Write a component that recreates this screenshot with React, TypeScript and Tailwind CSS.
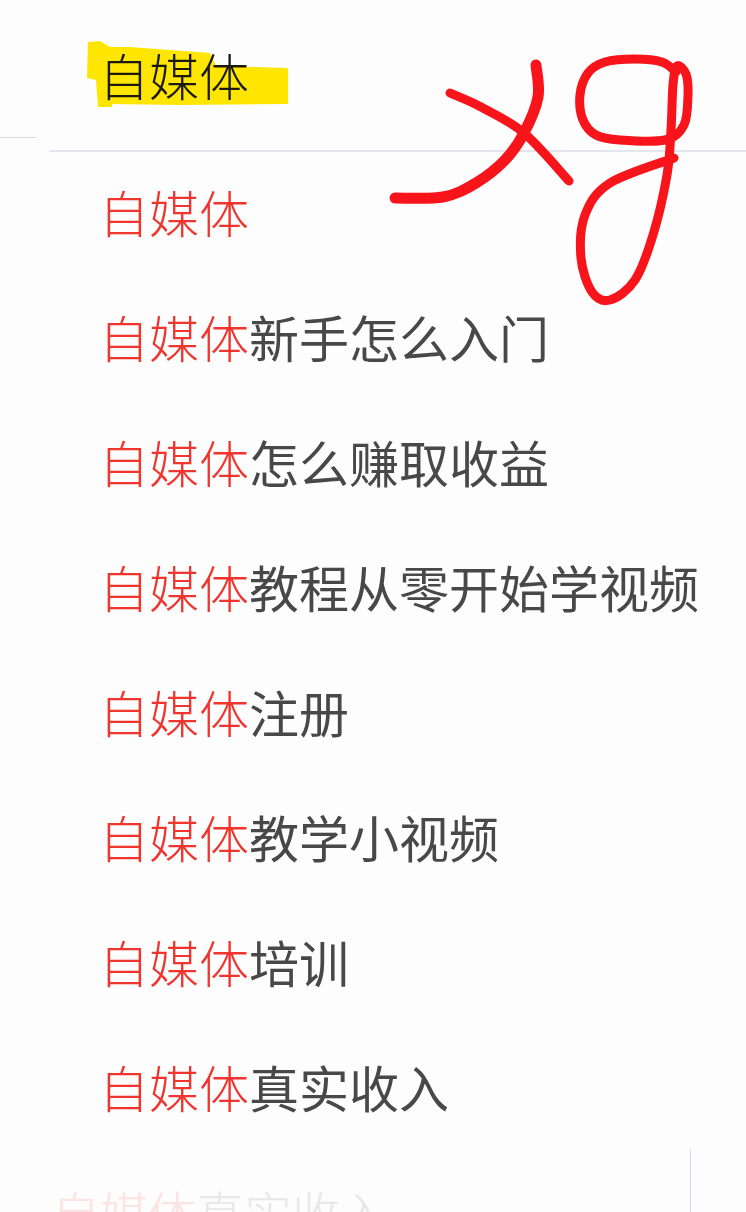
const keyword = "自媒体";
const suggestions = ["", "新手怎么入门", "怎么赚取收益", "教程从零开始学视频", "注册", "教学小视频", "培训", "真实收入"];

type Pt = [number, number];

function smooth(points: Pt[]): string {
  let d = `M${points[0][0]} ${points[0][1]}`;
  for (let i = 0; i < points.length - 1; i++) {
    const p0 = points[Math.max(i - 1, 0)];
    const p1 = points[i];
    const p2 = points[i + 1];
    const p3 = points[Math.min(i + 2, points.length - 1)];
    d += ` C${p1[0] + (p2[0] - p0[0]) / 6} ${p1[1] + (p2[1] - p0[1]) / 6} ${p2[0] - (p3[0] - p1[0]) / 6} ${p2[1] - (p3[1] - p1[1]) / 6} ${p2[0]} ${p2[1]}`;
  }
  return d;
}

const strokeA: Pt[] = [[395, 198], [443, 197], [476, 183], [505, 160], [524, 133], [538, 97], [536, 65]];
const strokeB: Pt[] = [[450, 93], [481, 107], [524, 133], [569, 181]];
const strokeG: Pt[] = [[676, 72], [662, 62], [635, 59], [605, 62], [588, 73], [580, 95], [583, 120], [596, 135], [620, 140], [665, 140], [684, 125], [688, 95], [686, 74], [677, 66], [673, 85], [671, 130], [667, 175], [653, 235], [635, 280], [610, 300], [592, 292], [581, 258], [585, 215], [610, 183], [674, 158]];

export default function App() {
  return (
    <div
      className="relative h-[1212px] w-[746px] overflow-hidden bg-[#fdfdfd] font-normal"
      style={{ fontFamily: '"Noto Sans CJK SC", "Noto Sans", sans-serif' }}
    >
      <svg className="absolute left-0 top-0" width="746" height="120" aria-hidden="true">
        <polygon
          fill="#ffe600"
          points="88,42 100,41 110,47 130,47 210,53 216,66 288,68 288,104 180,105 112,104 112,107 98,107 96,80 87,78"
        />
      </svg>
      <header className="relative ml-[49px] flex h-[152px] items-start border-b-2 border-[#e3e6ee] pl-[50px] pt-[38px]">
        <span className="text-[50px] font-light leading-[72px] text-[#1c1a10]">{keyword}</span>
      </header>
      <div className="absolute left-0 top-[137px] h-px w-[37px] bg-[#d5dde8]" />
      <ul className="relative -mt-[4px] flex flex-col pl-[99px]">
        {suggestions.map((rest, i) => (
          <li key={i} className="flex h-[125px] items-center whitespace-nowrap text-[50px] leading-none text-[#484848]">
            <span className="font-light text-[#f0342e]">{keyword}</span>
            <span>{rest}</span>
          </li>
        ))}
      </ul>
      <div className="relative whitespace-nowrap pl-[52px] pt-[39px] text-[48px] font-light leading-none text-[#e8e8ea]">
        <span className="text-[#fde3e1]">{keyword}</span>
        <span>真实收入</span>
      </div>
      <div className="absolute left-[690px] top-[1149px] h-[63px] w-px bg-[#d9dce6]" />
      <svg className="absolute left-0 top-0" width="746" height="320" fill="none" stroke="#f7141b" strokeLinecap="round" strokeLinejoin="round" aria-hidden="true">
        <path d={smooth(strokeA)} strokeWidth="11" />
        <path d={smooth(strokeB)} strokeWidth="9" />
        <path d={smooth(strokeG)} strokeWidth="9" />
      </svg>
    </div>
  );
}
